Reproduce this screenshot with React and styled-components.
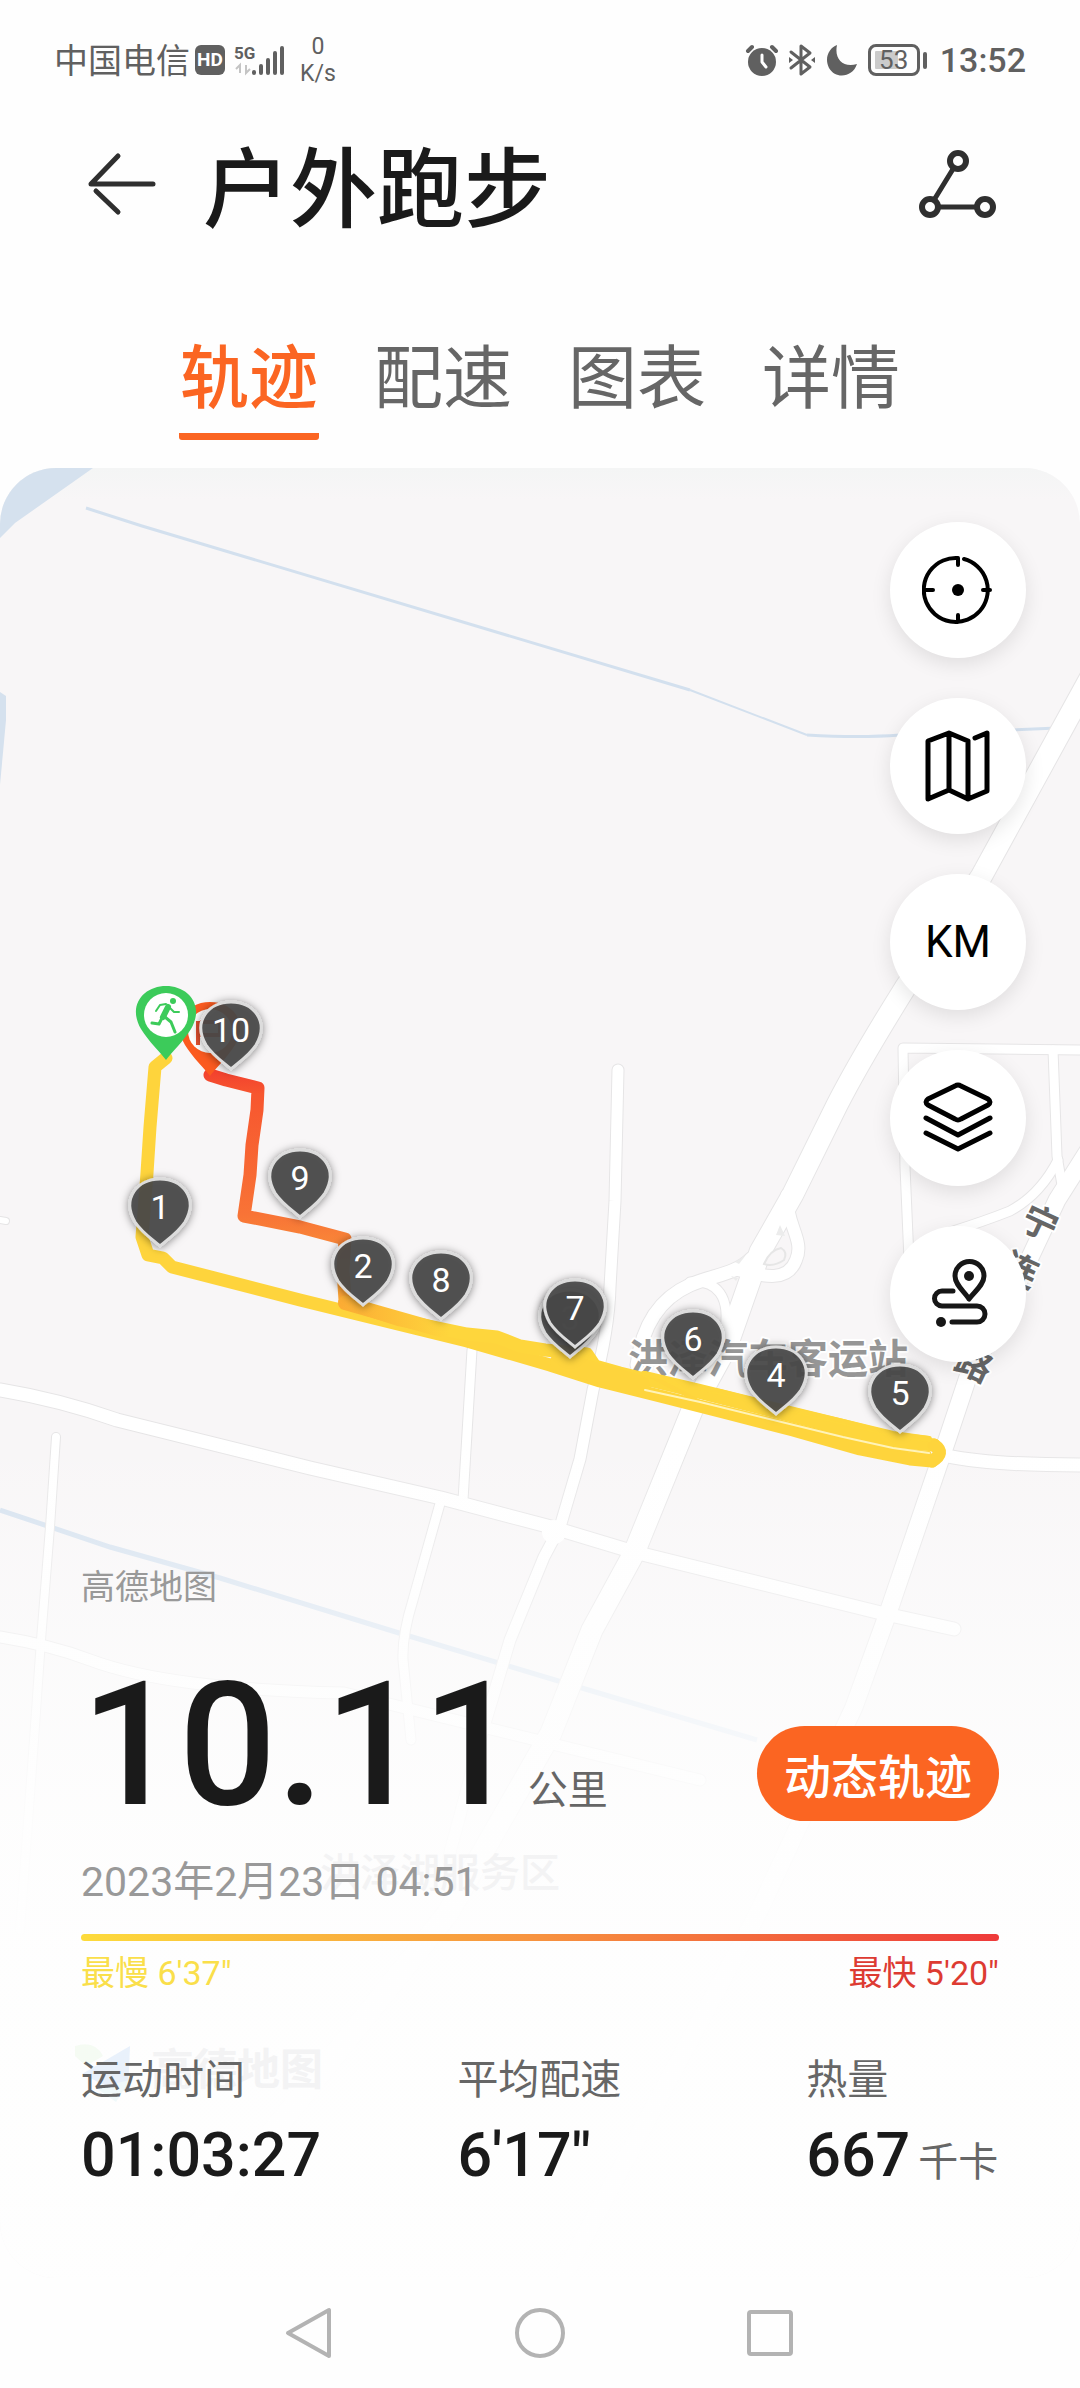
import React, { useState } from "react";
import styled, { createGlobalStyle } from "styled-components";

const GlobalStyle = createGlobalStyle`
  *, *::before, *::after { box-sizing: border-box; }
  body {
    margin: 0;
    background: #fefefe;
    color: #1a1a1a;
    font-family: Roboto, "Noto Sans CJK SC", sans-serif;
  }
  button { font-family: inherit; }
`;

const Page = styled.div`
  display: flex;
  flex-direction: column;
  min-height: 100vh;
`;

/* ---------- status bar ---------- */

const StatusBar = styled.div`
  display: flex;
  align-items: center;
  justify-content: space-between;
  height: 120px;
  padding: 0 54px;
  color: #606060;
`;

const StatusGroup = styled.div`
  display: flex;
  align-items: center;
  gap: ${(p) => p.$gap}px;
`;

const Carrier = styled.span`
  padding-top: 2px;
  font-size: 34px;
  line-height: 40px;
`;

const HdBadge = styled.span`
  width: 30px;
  border-radius: 6px;
  background: #606060;
  color: #fff;
  font-size: 19px;
  line-height: 30px;
  font-weight: 700;
  text-align: center;
`;

const NetRate = styled.span`
  display: flex;
  flex-direction: column;
  padding-left: 14px;
  font-size: 23px;
  line-height: 27px;
  text-align: center;
`;

const Battery = styled.span`
  display: flex;
  align-items: center;
  gap: 3px;

  &::after {
    content: "";
    width: 4px;
    height: 17px;
    border-radius: 2px;
    background: #606060;
  }
`;

const BatteryCell = styled.span`
  width: 52px;
  height: 32px;
  padding: 4px;
  border: 3px solid #606060;
  border-radius: 8px;
  background: linear-gradient(90deg, #cbcbcb 60%, #fefefe 60%) content-box;
  font-size: 26px;
  line-height: 18px;
  text-align: center;
`;

const Clock = styled.span`
  padding-left: 4px;
  font-size: 34px;
  line-height: 40px;
  font-weight: 500;
`;

/* ---------- header and tabs ---------- */

const Header = styled.header`
  display: flex;
  align-items: center;
  height: 130px;
  padding: 0 81px;
`;

const IconButton = styled.button`
  display: flex;
  padding: 0;
  border: 0;
  background: none;
  color: #2f2f2f;
  cursor: pointer;
`;

const Title = styled.h1`
  flex: 1;
  margin: 0;
  padding: 12px 0 0 38px;
  font-size: 87px;
  line-height: 120px;
  font-weight: 500;
`;

const Tabs = styled.nav`
  display: flex;
  align-items: flex-end;
  justify-content: center;
  gap: 54px;
  height: 218px;
  padding-bottom: 28px;
`;

const Tab = styled.button`
  padding: 0 1px 8px;
  border: 0;
  border-bottom: 7px solid ${(p) => (p.$active ? "#fb6522" : "transparent")};
  border-radius: 3px;
  background: none;
  color: ${(p) => (p.$active ? "#fb6522" : "#666")};
  font-size: 69px;
  line-height: 90px;
  font-weight: ${(p) => (p.$active ? 500 : 400)};
  cursor: pointer;
`;

/* ---------- map card ---------- */

const MapCard = styled.main`
  position: relative;
  display: flex;
  flex-direction: column;
  flex: 1;
  overflow: hidden;
  border-radius: 56px;
`;

const MapDrawing = styled.svg`
  position: absolute;
  inset: 0;
  width: 100%;
  height: 100%;
  font-family: Roboto, "Noto Sans CJK SC", sans-serif;
`;

const Tools = styled.div`
  position: relative;
  display: flex;
  flex-direction: column;
  align-self: flex-end;
  gap: 40px;
  padding: 54px 54px 0 0;
`;

const ToolButton = styled.button`
  display: flex;
  align-items: center;
  justify-content: center;
  width: 136px;
  height: 136px;
  padding: 0;
  border: 0;
  border-radius: 50%;
  background: #fff;
  color: #000;
  font-size: 44px;
  box-shadow: 0 6px 20px rgba(0, 0, 0, 0.1);
  cursor: pointer;
`;

const Panel = styled.section`
  position: relative;
  display: flex;
  flex-direction: column;
  padding: 205px 81px 87px;
`;

const Attribution = styled.span`
  color: #999;
  font-size: 34px;
  line-height: 40px;
`;

const DistanceRow = styled.div`
  display: flex;
  align-items: flex-end;
  justify-content: space-between;
  margin-top: 51px;
`;

const Distance = styled.div`
  display: flex;
  align-items: baseline;
  gap: 8px;
`;

const DistanceValue = styled.span`
  font-size: 172px;
  line-height: 174px;
  font-weight: 500;
`;

const Unit = styled.span`
  color: #666;
  font-size: 40px;
  line-height: 48px;
  font-weight: 400;
`;

const ReplayButton = styled.button`
  height: 95px;
  margin-bottom: 11px;
  padding: 0 27px;
  border: 0;
  border-radius: 48px;
  background: #fb6522;
  color: #fff;
  font-size: 47px;
  font-weight: 500;
  cursor: pointer;
`;

const DateLine = styled.time`
  margin-top: 26px;
  color: #999;
  font-size: 41px;
  line-height: 48px;
`;

const PaceBar = styled.div`
  height: 7px;
  margin-top: 28px;
  border-radius: 4px;
  background: linear-gradient(90deg, #fddb3b, #f7923f 50%, #ee3a3a);
`;

const PaceLabels = styled.div`
  display: flex;
  justify-content: space-between;
  margin-top: 12px;
`;

const PaceLabel = styled.span`
  color: ${(p) => p.$color};
  font-size: 34px;
  line-height: 40px;
`;

const Stats = styled.dl`
  display: grid;
  grid-template-columns: 41fr 38fr 21fr;
  margin: 63px 0 0;
`;

const StatLabel = styled.dt`
  color: #666;
  font-size: 41px;
  line-height: 48px;
`;

const StatValue = styled.dd`
  display: flex;
  align-items: baseline;
  gap: 8px;
  margin: 15px 0 0;
  font-size: 61px;
  line-height: 72px;
  font-weight: 500;
  white-space: nowrap;
`;

const SystemNav = styled.nav`
  display: grid;
  grid-template-columns: repeat(3, 230px);
  justify-content: center;
  justify-items: center;
  align-items: center;
  height: 110px;
`;

const NavButton = styled(IconButton)`
  color: #b3b3b3;
`;

/* ---------- map data ---------- */

const ROADS = [
  { d: "M0 1637Q50 1645 90 1660T193 1683T344 1693L700 1780", w: 11 },
  { d: "M56 1437L50 1527L41 1640L34 1740L20 1930", w: 8 },
  { d: "M441 1500L413 1600Q402 1635 403 1660L411 1740", w: 9 },
  { d: "M472 1350L463 1500", w: 9 },
  { d: "M0 1390Q60 1400 117 1420L310 1468L441 1498L551 1527L634 1552L881 1613L954 1629", w: 13 },
  { d: "M618 1070L615 1201L610 1287Q609 1330 593 1390L580 1459L560 1527L544 1557L510 1640L480 1740L448 1860", w: 11 },
  { d: "M0 1220L6 1221", w: 6 },
  { d: "M1080 1050L903 1048L905 1167L909 1260", w: 9 },
  { d: "M1053 1050L1057 1156L1062 1185", w: 9 },
  { d: "M1058 1160Q1040 1195 1010 1211Q985 1221 950 1232", w: 9 },
  { d: "M947 1456Q990 1465 1080 1465", w: 13 },
  { d: "M1095 1140L1057 1200L1010 1300L968 1377L947 1440L888 1613L854 1707L758 1913L565 2273", w: 17 },
  { d: "M637 1365Q645 1305 690 1285C712 1275 735 1275 752 1258", w: 13 },
  { d: "M690 1282C716 1280 732 1295 724 1335", w: 9 },
  { d: "M787 1195C786 1225 805 1240 796 1260C788 1282 765 1277 738 1270", w: 12 },
  { d: "M1100 660L981 877L905 988Q860 1060 837 1105L793 1194L760 1252L727 1346L693 1408L634 1553L592 1630L551 1733L448 1913L365 2017L158 2275", w: 21 },
];

const WATER_LINES = [
  { d: "M86 508L142 526L690 690", w: 3 },
  { d: "M690 690L807 735", w: 2 },
  { d: "M807 735Q860 738 900 735L1057 728", w: 3 },
  { d: "M0 1510L110 1547L220 1578L399 1633L565 1683L757 1740", w: 5 },
];

const PINS = [
  { n: 10, x: 231, y: 1031 },
  { n: 9, x: 300, y: 1179 },
  { n: 1, x: 160, y: 1208 },
  { n: 2, x: 363, y: 1267 },
  { n: 8, x: 441, y: 1281 },
  { n: 3, x: 570, y: 1319 },
  { n: 7, x: 575, y: 1309 },
  { n: 6, x: 693, y: 1340 },
  { n: 4, x: 776, y: 1376 },
  { n: 5, x: 900, y: 1394 },
];

const ROAD_NAME = [
  { ch: "宁", x: 1040, y: 1223 },
  { ch: "连", x: 1020, y: 1270 },
  { ch: "公", x: 996, y: 1319 },
  { ch: "路", x: 974, y: 1364 },
];

const PIN_PATH = "M0 38C-5 33 -17 26 -25 14C-39 -10 -22 -29 0 -29C22 -29 39 -10 25 14C17 26 5 33 0 38Z";
const FLAG_PIN_PATH = "M0 45C-5 38 -17 27 -25 14C-39 -10 -22 -29 0 -29C22 -29 39 -10 25 14C17 27 5 38 0 45Z";

function KmPin({ n, x, y }) {
  return (
    <g transform={`translate(${x} ${y})`}>
      <path d={PIN_PATH} fill="#484848" fillOpacity="0.9" stroke="#dcdcdc" strokeWidth="3" filter="url(#pinShadow)" />
      <text y="11" textAnchor="middle" fontSize="34" fill={n === 3 ? "#6c6c6c" : "#fff"}>
        {n}
      </text>
    </g>
  );
}

function TrackMap() {
  return (
    <MapDrawing viewBox="0 468 1080 1810" preserveAspectRatio="xMidYMin slice" role="img" aria-label="跑步轨迹地图">
      <defs>
        <filter id="pinShadow" x="-40%" y="-40%" width="180%" height="180%">
          <feDropShadow dx="0" dy="1" stdDeviation="4" floodColor="#000" floodOpacity="0.5" />
        </filter>
        <linearGradient id="fade" x1="0" y1="1440" x2="0" y2="1960" gradientUnits="userSpaceOnUse">
          <stop offset="0" stopColor="#fdfdfd" stopOpacity="0" />
          <stop offset="0.2" stopColor="#fdfdfd" stopOpacity="0.3" />
          <stop offset="0.5" stopColor="#fdfdfd" stopOpacity="0.76" />
          <stop offset="0.75" stopColor="#fefefe" stopOpacity="0.92" />
          <stop offset="1" stopColor="#fefefe" stopOpacity="0.98" />
        </linearGradient>
        <linearGradient id="topEdge" x1="0" y1="468" x2="0" y2="500" gradientUnits="userSpaceOnUse">
          <stop offset="0" stopColor="#f4f5f5" />
          <stop offset="1" stopColor="#f8f6f7" />
        </linearGradient>
        <linearGradient id="fast" x1="0" y1="1070" x2="0" y2="1310" gradientUnits="userSpaceOnUse">
          <stop offset="0" stopColor="#f2402e" />
          <stop offset="0.1" stopColor="#f7562f" />
          <stop offset="0.6" stopColor="#f87336" />
          <stop offset="0.75" stopColor="#f98a38" />
          <stop offset="1" stopColor="#fcac34" />
        </linearGradient>
        <linearGradient id="back" x1="340" y1="0" x2="450" y2="0" gradientUnits="userSpaceOnUse">
          <stop offset="0" stopColor="#fcac34" />
          <stop offset="1" stopColor="#fed63c" />
        </linearGradient>
      </defs>

      <rect x="-2000" y="468" width="5080" height="4000" fill="#f8f6f7" />
      <rect x="-2000" y="468" width="5080" height="32" fill="url(#topEdge)" />
      <path d="M0 468H93L15 523L0 538Z" fill="#d5e1ee" />
      <path d="M0 692L6 696V720L0 785Z" fill="#d5e1ee" />
      {WATER_LINES.map((r) => (
        <path key={r.d} d={r.d} fill="none" stroke="#d3e0ee" strokeWidth={r.w} />
      ))}

      <g fill="none" strokeLinecap="round" strokeLinejoin="round">
        {ROADS.map((r) => (
          <path key={r.d} d={r.d} stroke="#e6e5e6" strokeWidth={r.w + 2} />
        ))}
        {ROADS.map((r) => (
          <path key={r.d} d={r.d} stroke="#fff" strokeWidth={r.w} />
        ))}
      </g>
      <circle cx="554" cy="1532" r="12" fill="#fff" />
      <g fill="#ececec">
        <path d="M780 1225L785 1236L776 1235Z" />
        <path d="M746 1255L739 1264L735 1262Z" />
        <path d="M731 1276L738 1278L736 1281Z" />
        <path d="M764 1264Q770 1250 781 1248Q788 1252 784 1260Q774 1267 764 1264Z" fill="#f8f6f7" stroke="#e6e6e6" strokeWidth="2" />
      </g>

      <rect x="-2000" y="1440" width="5080" height="3000" fill="url(#fade)" />

      <g fontWeight="700" stroke="#fff" strokeWidth="4" strokeLinejoin="round" paintOrder="stroke">
        <text x="768" y="1373" textAnchor="middle" fontSize="40" fill="#969696">洪泽汽车客运站</text>
        {ROAD_NAME.map((c) => (
          <text
            key={c.ch}
            transform={`translate(${c.x} ${c.y}) rotate(25)`}
            y="13"
            textAnchor="middle"
            fontSize="36"
            fill="#666"
          >
            {c.ch}
          </text>
        ))}
      </g>
      <text x="320" y="1887" fontSize="40" fontWeight="500" fill="#f3f3f4">洪泽湖服务区</text>
      <path d="M75 2046Q95 2040 103 2056L86 2066L75 2056Z" fill="#f5fbf3" />
      <path d="M82 2074L130 2046L128 2092L106 2086Z" fill="#e9f1fb" />
      <path d="M96 2088L130 2080L116 2102Z" fill="#f0f9fa" />
      <text x="151" y="2085" fontSize="43" fontWeight="700" fill="#f3f3f4">高德地图</text>

      <g fill="none" strokeLinecap="round" strokeLinejoin="round" strokeWidth="13">
        <path
          d="M210 1075L226 1080L258 1088L257 1110L252 1145L250 1175L244 1216L300 1227L345 1239L343 1270L345 1300"
          stroke="url(#fast)"
        />
        <path
          d="M166 1058L155 1067L150 1127L147 1173L142 1237L148 1255L163 1258L172 1267L300 1300L467 1341L550 1365L600 1381L660 1396L727 1413L793 1430L860 1449L910 1459L932 1461"
          stroke="#fed43c"
        />
        <path
          d="M345 1302L400 1320L467 1334L497 1337L520 1346L545 1350L587 1354L595 1366L620 1373L690 1390L753 1406L843 1429L893 1441L934 1445"
          stroke="url(#back)"
        />
        <path d="M345 1303L440 1330" stroke="url(#back)" strokeWidth="14" />
        <path d="M934 1445Q946 1453 932 1461" stroke="#fed43c" />
        <path d="M560 1362L640 1385" stroke="#fed43c" strokeWidth="20" />
        <path d="M645 1374L700 1387L843 1422L893 1434L929 1439" stroke="#fed73c" strokeWidth="6" />
        <path d="M645 1373L700 1402L843 1437L893 1449L929 1453" stroke="#fed43c" strokeWidth="4" />
        <path d="M643 1373L700 1388L720 1391L770 1404L843 1421L893 1434L929 1438" stroke="#fed63c" strokeWidth="4" />
        <path d="M645 1390L700 1402L843 1437L893 1448L929 1453" stroke="#fff3b8" strokeWidth="2" />
      </g>

      <g transform="translate(210 1031)">
        <path d={FLAG_PIN_PATH} fill="#fb5a1f" />
        <circle r="22" fill="#fff" />
        <path d="M-12 -10V14M-10 -9H10V4H-10" fill="none" stroke="#e2502f" strokeWidth="4" />
      </g>
      {PINS.map((p) => (
        <KmPin key={p.n} {...p} />
      ))}
      <g transform="translate(166 1015)">
        <path d={FLAG_PIN_PATH} fill="#3ccb5a" />
        <circle r="22" fill="#fff" />
        <circle cx="7" cy="-14" r="3" fill="#3ccb5a" />
        <g fill="none" stroke="#3ccb5a" strokeLinecap="round" strokeLinejoin="round">
          <path d="M2 -8L-3 2" strokeWidth="6" />
          <path d="M0 -11L-6 -10L-10 -4M4 -7L8 -3L13 -3" strokeWidth="2" />
          <path d="M-1 2L5 7L9 17M-4 3L-7 9L-14 8" strokeWidth="3" />
        </g>
      </g>
    </MapDrawing>
  );
}

/* ---------- icons ---------- */

const line = { fill: "none", stroke: "currentColor", strokeLinecap: "round", strokeLinejoin: "round" };

const SignalIcon = () => (
  <svg width="56" height="36" viewBox="0 0 56 36" aria-hidden="true">
    <text x="4" y="17" fontSize="17" fontWeight="700" fill="#606060">5G</text>
    <path d="M10 31V23L6 27M16 23V31L20 27" fill="none" stroke="#c4c4c4" strokeWidth="2" />
    <path d="M24 30V31M31 24V31M38 18V31M45 11V31M52 6V31" stroke="#606060" strokeWidth="4" strokeLinecap="round" />
  </svg>
);

const AlarmIcon = () => (
  <svg width="34" height="34" viewBox="0 0 34 34" aria-hidden="true">
    <circle cx="17" cy="19" r="14" fill="#606060" />
    <path d="M17 12V19L21 24" {...line} stroke="#fff" strokeWidth="3" />
    <path d="M3 8L7 4M31 8L27 4" {...line} strokeWidth="4" />
  </svg>
);

const BluetoothIcon = () => (
  <svg width="28" height="34" viewBox="0 0 28 34" aria-hidden="true">
    <path d="M3 9L22 24L13 31V3L22 10L3 25" {...line} strokeWidth="3" />
    <path d="M1 14L5 17L1 20ZM27 14L23 17L27 20Z" fill="#606060" />
  </svg>
);

const MoonIcon = () => (
  <svg width="34" height="34" viewBox="0 0 34 34" aria-hidden="true">
    <path d="M12 2C9 16 18 25 32 21C28 34 11 37 4 25C-1 15 4 5 12 2Z" fill="#606060" />
  </svg>
);

const BackIcon = () => (
  <svg width="84" height="70" viewBox="0 0 84 70" aria-hidden="true">
    <path d="M72 34H10L37 6M15 41L37 62" {...line} strokeWidth="5" />
  </svg>
);

const ShareIcon = () => (
  <svg width="80" height="72" viewBox="0 0 80 72" aria-hidden="true">
    <g {...line} strokeWidth="6">
      <circle cx="39" cy="12" r="8" />
      <circle cx="11" cy="58" r="8" />
      <circle cx="66" cy="58" r="8" />
      <path d="M34 20L15 51M20 58H57" strokeWidth="5" />
    </g>
  </svg>
);

const LocateIcon = () => (
  <svg width="72" height="72" viewBox="0 0 72 72" aria-hidden="true">
    <g {...line} strokeWidth="4">
      <path d="M42 5A32 32 0 1 1 36 4V11M4 36H11M61 36H68M36 61V68" />
    </g>
    <circle cx="36" cy="36" r="6" fill="currentColor" />
  </svg>
);

const FoldedMapIcon = () => (
  <svg width="72" height="76" viewBox="0 0 72 76" aria-hidden="true">
    <path d="M46 13L27 5L6 13V71L27 62L46 71L65 63V5L53 10M27 5V62M46 13V71" {...line} strokeWidth="5" />
  </svg>
);

const LayersIcon = () => (
  <svg width="72" height="72" viewBox="0 0 72 72" aria-hidden="true">
    <path
      d="M33 4Q36 2 39 4L66 17Q70 20 66 23L39 37Q36 39 33 37L6 23Q2 20 6 17ZM4 36L36 53L68 36M4 51L36 67L68 51"
      {...line}
      strokeWidth="5"
    />
  </svg>
);

const RouteIcon = () => (
  <svg width="72" height="72" viewBox="0 0 72 72" color="#161616" aria-hidden="true">
    <g {...line} strokeWidth="5">
      <path d="M47 41C43 34 33 27 33 18A14 14 0 0 1 62 18C62 27 52 34 47 41Z" />
      <path d="M31 33H20A7 7 0 0 0 20 48H55A7 7 0 0 1 55 64H30" />
    </g>
    <circle cx="47" cy="18" r="5" fill="currentColor" />
    <circle cx="19" cy="64" r="5" fill="currentColor" />
  </svg>
);

const NavIcon = ({ children }) => (
  <svg width="56" height="56" viewBox="0 0 56 56" aria-hidden="true">
    <g {...line} strokeWidth="4">{children}</g>
  </svg>
);

/* ---------- page ---------- */

const TAB_NAMES = ["轨迹", "配速", "图表", "详情"];

const TOOLS = [
  { label: "定位", content: <LocateIcon /> },
  { label: "地图类型", content: <FoldedMapIcon /> },
  { label: "公里标记", content: "KM" },
  { label: "图层", content: <LayersIcon /> },
  { label: "路线", content: <RouteIcon /> },
];

const STATS = [
  { label: "运动时间", value: "01:03:27" },
  { label: "平均配速", value: "6'17\"" },
  { label: "热量", value: "667", unit: "千卡" },
];

export default function App() {
  const [tab, setTab] = useState(TAB_NAMES[0]);

  return (
    <Page>
      <GlobalStyle />
      <StatusBar>
        <StatusGroup $gap={5}>
          <Carrier>中国电信</Carrier>
          <HdBadge>HD</HdBadge>
          <StatusGroup $gap={0}>
            <SignalIcon />
            <NetRate>
              <span>0</span>
              <span>K/s</span>
            </NetRate>
          </StatusGroup>
        </StatusGroup>
        <StatusGroup $gap={9}>
          <AlarmIcon />
          <BluetoothIcon />
          <MoonIcon />
          <Battery>
            <BatteryCell>53</BatteryCell>
          </Battery>
          <Clock>13:52</Clock>
        </StatusGroup>
      </StatusBar>

      <Header>
        <IconButton aria-label="返回">
          <BackIcon />
        </IconButton>
        <Title>户外跑步</Title>
        <IconButton aria-label="分享">
          <ShareIcon />
        </IconButton>
      </Header>

      <Tabs>
        {TAB_NAMES.map((name) => (
          <Tab key={name} $active={name === tab} onClick={() => setTab(name)}>
            {name}
          </Tab>
        ))}
      </Tabs>

      <MapCard>
        <TrackMap />
        <Tools>
          {TOOLS.map((t) => (
            <ToolButton key={t.label} aria-label={t.label}>
              {t.content}
            </ToolButton>
          ))}
        </Tools>
        <Panel>
          <Attribution>高德地图</Attribution>
          <DistanceRow>
            <Distance>
              <DistanceValue>10.11</DistanceValue>
              <Unit>公里</Unit>
            </Distance>
            <ReplayButton>动态轨迹</ReplayButton>
          </DistanceRow>
          <DateLine dateTime="2023-02-23T04:51">2023年2月23日 04:51</DateLine>
          <PaceBar />
          <PaceLabels>
            <PaceLabel $color="#fadf4a">最慢 6'37"</PaceLabel>
            <PaceLabel $color="#dd3b32">最快 5'20"</PaceLabel>
          </PaceLabels>
          <Stats>
            {STATS.map((s) => (
              <div key={s.label}>
                <StatLabel>{s.label}</StatLabel>
                <StatValue>
                  {s.value}
                  {s.unit && <Unit>{s.unit}</Unit>}
                </StatValue>
              </div>
            ))}
          </Stats>
        </Panel>
      </MapCard>

      <SystemNav>
        <NavButton aria-label="后退">
          <NavIcon>
            <path d="M47 5V51L6 28Z" />
          </NavIcon>
        </NavButton>
        <NavButton aria-label="主页">
          <NavIcon>
            <circle cx="28" cy="28" r="23" />
          </NavIcon>
        </NavButton>
        <NavButton aria-label="最近任务">
          <NavIcon>
            <rect x="7" y="7" width="42" height="42" rx="2" />
          </NavIcon>
        </NavButton>
      </SystemNav>
    </Page>
  );
}
